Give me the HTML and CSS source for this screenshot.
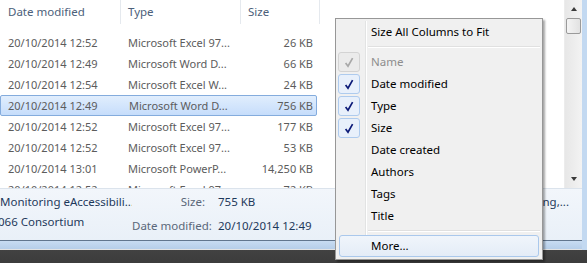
FILE: index.html
```html
<!DOCTYPE html>
<html lang="en">
<head>
    <meta charset="UTF-8">
    <title>Column chooser</title>
    <link rel="stylesheet" href="styles.css">
</head>
<body>
    <div class="window">
        <!-- File list with column header and scrollbar -->
        <div class="pane-top">
            <div class="list">
                <div class="list-head">
                    <div class="col col-date">Date modified</div>
                    <div class="col col-type">Type</div>
                    <div class="col col-size">Size</div>
                </div>
                <div class="rows">
                    <div class="row"><span class="col col-date">20/10/2014 12:52</span><span class="col col-type">Microsoft Excel 97...</span><span class="col col-size">26 KB</span></div>
                    <div class="row"><span class="col col-date">20/10/2014 12:49</span><span class="col col-type">Microsoft Word D...</span><span class="col col-size">66 KB</span></div>
                    <div class="row"><span class="col col-date">20/10/2014 12:54</span><span class="col col-type">Microsoft Excel W...</span><span class="col col-size">24 KB</span></div>
                    <div class="row selected"><span class="col col-date">20/10/2014 12:49</span><span class="col col-type">Microsoft Word D...</span><span class="col col-size">756 KB</span></div>
                    <div class="row"><span class="col col-date">20/10/2014 12:52</span><span class="col col-type">Microsoft Excel 97...</span><span class="col col-size">177 KB</span></div>
                    <div class="row"><span class="col col-date">20/10/2014 12:52</span><span class="col col-type">Microsoft Excel 97...</span><span class="col col-size">53 KB</span></div>
                    <div class="row"><span class="col col-date">20/10/2014 13:01</span><span class="col col-type">Microsoft PowerP...</span><span class="col col-size">14,250 KB</span></div>
                    <div class="row"><span class="col col-date">20/10/2014 12:52</span><span class="col col-type">Microsoft Excel 97...</span><span class="col col-size">72 KB</span></div>
                </div>
            </div>
            <div class="scrollbar">
                <div class="arrow arrow-up"></div>
                <div class="thumb"></div>
                <div class="track"></div>
                <div class="arrow arrow-down"></div>
            </div>
        </div>

        <!-- Details pane -->
        <div class="details">
            <div class="doc">
                <div>Monitoring eAccessibili...</div>
                <div class="cut">066 Consortium</div>
            </div>
            <div class="props">
                <span class="label">Size:</span><span>755 KB</span>
                <span class="label">Date modified:</span><span>20/10/2014 12:49</span>
            </div>
            <div class="tags">Tags: Accessibility; Monitoring,...</div>
        </div>
        <div class="frame-bottom"></div>
    </div>

    <!-- Column header context menu -->
    <div class="menu">
        <div class="item">Size All Columns to Fit</div>
        <div class="sep"></div>
        <div class="item disabled"><span class="check"><svg width="10" height="11" viewBox="0 0 10 11"><path d="M1.6 6 L4 9.2 L8.6 1.2" /></svg></span>Name</div>
        <div class="item"><span class="check"><svg width="10" height="11" viewBox="0 0 10 11"><path d="M1.6 6 L4 9.2 L8.6 1.2" /></svg></span>Date modified</div>
        <div class="item"><span class="check"><svg width="10" height="11" viewBox="0 0 10 11"><path d="M1.6 6 L4 9.2 L8.6 1.2" /></svg></span>Type</div>
        <div class="item"><span class="check"><svg width="10" height="11" viewBox="0 0 10 11"><path d="M1.6 6 L4 9.2 L8.6 1.2" /></svg></span>Size</div>
        <div class="item">Date created</div>
        <div class="item">Authors</div>
        <div class="item">Tags</div>
        <div class="item">Title</div>
        <div class="sep"></div>
        <div class="item hover">More...</div>
    </div>
</body>
</html>
```

FILE: styles.css
```css
/* General styles */
body {
    margin: 0;
    width: 587px;
    height: 263px;
    overflow: hidden;
    font-family: "Noto Sans", "Open Sans", sans-serif;
    font-size: 11px;
    background: linear-gradient(#a9a9a9, #3c3c3c);
    position: relative;
}

.window {
    display: flex;
    flex-direction: column;
    border-right: 5px solid #c3d9f1;
}

/* Top area: list + scrollbar */
.pane-top {
    display: flex;
    height: 188px;
    background: #fff;
}

.list {
    flex: 1;
    overflow: hidden;
}

.list-head {
    display: flex;
    height: 24px;
    color: #4c607a;
    font-size: 11.5px;
}
.list-head .col {
    line-height: 24px;
    border-right: 1px solid #e5e9ee;
}
.col-date {
    width: 121px;
    padding-left: 8px;
    box-sizing: border-box;
}
.col-type {
    width: 120px;
    padding-left: 7px;
    box-sizing: border-box;
    white-space: nowrap;
}
.list-head .col-size {
    width: 79px;
    padding-left: 7px;
    box-sizing: border-box;
}

.rows {
    margin-top: 8px;
}
.row {
    display: flex;
    width: 317px;
    height: 21px;
    line-height: 21px;
    color: #5c5c5c;
    box-sizing: border-box;
    white-space: nowrap;
}
.row .col-size {
    flex: 1;
    text-align: right;
    padding-right: 4px;
}
.row.selected {
    border: 1px solid #84acdd;
    border-radius: 2px;
    background: linear-gradient(#e1eefd, #c6ddfb);
    line-height: 19px;
}
.row.selected .col-date {
    padding-left: 7px;
}
.row.selected .col-size {
    padding-right: 3px;
}

/* Scrollbar */
.scrollbar {
    width: 17px;
    display: flex;
    flex-direction: column;
    align-items: center;
    background: linear-gradient(to right, #e7e7e7, #f3f3f3);
    border-left: 1px solid #ececec;
}
.arrow {
    width: 0;
    height: 0;
    border-left: 3.5px solid transparent;
    border-right: 3.5px solid transparent;
}
.arrow-up {
    margin-top: 7px;
    border-bottom: 4px solid #3a3a3a;
}
.arrow-down {
    margin-bottom: 7px;
    border-top: 4px solid #3a3a3a;
}
.thumb {
    margin-top: 7px;
    width: 13px;
    height: 14px;
    border: 1px solid #9a9a9a;
    border-radius: 2px;
    background: linear-gradient(to right, #f4f4f4, #e2e2e2);
}
.track {
    flex: 1;
}

/* Details pane */
.details {
    height: 53px;
    box-sizing: border-box;
    border-top: 1px solid #dbe3ec;
    border-bottom: 1px solid #62768e;
    background: linear-gradient(#f2f6fb, #e9f0f8);
    color: #1e395b;
    display: flex;
    padding-top: 3px;
    line-height: 20px;
    font-size: 11.5px;
    white-space: nowrap;
}
.doc {
    width: 132px;
    overflow: hidden;
}
.doc .cut {
    margin-left: -2px;
}
.props {
    display: grid;
    grid-template-columns: 73px auto;
    column-gap: 13px;
}
.props .label {
    text-align: right;
    color: #5a6779;
}
.tags {
    margin-left: auto;
    padding-right: 13px;
}

.frame-bottom {
    height: 8px;
    background: linear-gradient(#c8dcf2, #b6cee9);
    border-bottom: 1px solid #e2e2e2;
}

/* Context menu */
.menu {
    position: absolute;
    left: 335px;
    top: 18px;
    width: 208px;
    box-sizing: border-box;
    padding: 2px;
    border: 1px solid #979797;
    background: #f0f0f0;
    box-shadow: 2px 2px 2px rgba(0, 0, 0, 0.35);
    color: #000;
    font-size: 11.5px;
}
.menu::before {
    content: "";
    position: absolute;
    left: 29px;
    top: 2px;
    bottom: 2px;
    width: 1px;
    background: #e2e3e3;
    border-right: 1px solid #fff;
}
.item {
    position: relative;
    height: 22px;
    line-height: 22px;
    padding-left: 33px;
    white-space: nowrap;
}
.item.disabled {
    color: #8d8d8d;
}
.item.hover {
    border: 1px solid #aac8ec;
    border-radius: 3px;
    background: linear-gradient(#f0f5fb, #e4ecf7);
    height: 20px;
    line-height: 20px;
    margin: 0 1px;
    padding-left: 31px;
    z-index: 1;
}
.sep {
    height: 8px;
    margin-left: 30px;
    position: relative;
}
.sep::after {
    content: "";
    position: absolute;
    left: 0;
    right: 0;
    top: 3px;
    height: 1px;
    background: #e0e0e0;
    border-bottom: 1px solid #fff;
}
.check {
    position: absolute;
    left: 0;
    top: 1px;
    width: 22px;
    height: 20px;
    box-sizing: border-box;
    border: 1px solid #aecbee;
    border-radius: 3px;
    background: #e8f0fb;
    display: flex;
    align-items: center;
    justify-content: center;
}
.check svg path {
    fill: none;
    stroke: #0c1a78;
    stroke-width: 1.7;
}
.disabled .check {
    border-color: #d3d3d3;
    background: #ebebeb;
}
.disabled .check svg path {
    stroke: #a8a8a8;
}
```
